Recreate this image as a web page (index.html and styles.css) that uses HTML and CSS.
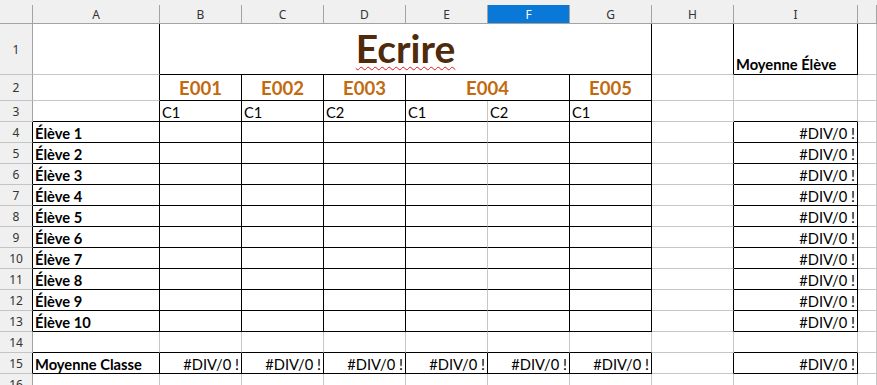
FILE: index.html
```html
<!DOCTYPE html>
<html lang="fr">
<head>
<meta charset="utf-8">
<title>Ecrire</title>
<link rel="stylesheet" href="styles.css">
</head>
<body>
<div class="sheet">
  <!-- column headers -->
  <div class="ch"></div>
  <div class="ch">A</div>
  <div class="ch">B</div>
  <div class="ch">C</div>
  <div class="ch">D</div>
  <div class="ch">E</div>
  <div class="ch sel">F</div>
  <div class="ch">G</div>
  <div class="ch">H</div>
  <div class="ch">I</div>
  <div class="ch"></div>

  <!-- row 1 -->
  <div class="rh">1</div>
  <div class="c br"></div>
  <div class="c br bb title span6"><span class="typo">Ecrire</span></div>
  <div class="c br"></div>
  <div class="c br bb bold lift">Moyenne Élève</div>
  <div class="c"></div>

  <!-- row 2 -->
  <div class="rh">2</div>
  <div class="c br"></div>
  <div class="c br bb code">E001</div>
  <div class="c br bb code">E002</div>
  <div class="c br bb code">E003</div>
  <div class="c br bb code span2">E004</div>
  <div class="c br bb code">E005</div>
  <div class="c"></div>
  <div class="c"></div>
  <div class="c"></div>

  <!-- row 3 -->
  <div class="rh">3</div>
  <div class="c br bb"></div>
  <div class="c br bb">C1</div>
  <div class="c br bb">C1</div>
  <div class="c br bb">C2</div>
  <div class="c bb">C1</div>
  <div class="c br bb">C2</div>
  <div class="c br bb">C1</div>
  <div class="c"></div>
  <div class="c bb"></div>
  <div class="c"></div>

  <!-- rows 4 to 13: students -->
  <div class="rh edge">4</div>
  <div class="c br bb bold">Élève 1</div>
  <div class="c br bb"></div><div class="c br bb"></div><div class="c br bb"></div>
  <div class="c bb"></div><div class="c br bb"></div><div class="c br bb"></div>
  <div class="c br"></div>
  <div class="c br bb num">#DIV/0 !</div>
  <div class="c"></div>

  <div class="rh edge">5</div>
  <div class="c br bb bold">Élève 2</div>
  <div class="c br bb"></div><div class="c br bb"></div><div class="c br bb"></div>
  <div class="c bb"></div><div class="c br bb"></div><div class="c br bb"></div>
  <div class="c br"></div>
  <div class="c br bb num">#DIV/0 !</div>
  <div class="c"></div>

  <div class="rh edge">6</div>
  <div class="c br bb bold">Élève 3</div>
  <div class="c br bb"></div><div class="c br bb"></div><div class="c br bb"></div>
  <div class="c bb"></div><div class="c br bb"></div><div class="c br bb"></div>
  <div class="c br"></div>
  <div class="c br bb num">#DIV/0 !</div>
  <div class="c"></div>

  <div class="rh edge">7</div>
  <div class="c br bb bold">Élève 4</div>
  <div class="c br bb"></div><div class="c br bb"></div><div class="c br bb"></div>
  <div class="c bb"></div><div class="c br bb"></div><div class="c br bb"></div>
  <div class="c br"></div>
  <div class="c br bb num">#DIV/0 !</div>
  <div class="c"></div>

  <div class="rh edge">8</div>
  <div class="c br bb bold">Élève 5</div>
  <div class="c br bb"></div><div class="c br bb"></div><div class="c br bb"></div>
  <div class="c bb"></div><div class="c br bb"></div><div class="c br bb"></div>
  <div class="c br"></div>
  <div class="c br bb num">#DIV/0 !</div>
  <div class="c"></div>

  <div class="rh edge">9</div>
  <div class="c br bb bold">Élève 6</div>
  <div class="c br bb"></div><div class="c br bb"></div><div class="c br bb"></div>
  <div class="c bb"></div><div class="c br bb"></div><div class="c br bb"></div>
  <div class="c br"></div>
  <div class="c br bb num">#DIV/0 !</div>
  <div class="c"></div>

  <div class="rh edge">10</div>
  <div class="c br bb bold">Élève 7</div>
  <div class="c br bb"></div><div class="c br bb"></div><div class="c br bb"></div>
  <div class="c bb"></div><div class="c br bb"></div><div class="c br bb"></div>
  <div class="c br"></div>
  <div class="c br bb num">#DIV/0 !</div>
  <div class="c"></div>

  <div class="rh edge">11</div>
  <div class="c br bb bold">Élève 8</div>
  <div class="c br bb"></div><div class="c br bb"></div><div class="c br bb"></div>
  <div class="c bb"></div><div class="c br bb"></div><div class="c br bb"></div>
  <div class="c br"></div>
  <div class="c br bb num">#DIV/0 !</div>
  <div class="c"></div>

  <div class="rh edge">12</div>
  <div class="c br bb bold">Élève 9</div>
  <div class="c br bb"></div><div class="c br bb"></div><div class="c br bb"></div>
  <div class="c bb"></div><div class="c br bb"></div><div class="c br bb"></div>
  <div class="c br"></div>
  <div class="c br bb num">#DIV/0 !</div>
  <div class="c"></div>

  <div class="rh edge">13</div>
  <div class="c br bb bold">Élève 10</div>
  <div class="c br bb"></div><div class="c br bb"></div><div class="c br bb"></div>
  <div class="c bb"></div><div class="c br bb"></div><div class="c br bb"></div>
  <div class="c br"></div>
  <div class="c br bb num">#DIV/0 !</div>
  <div class="c"></div>

  <!-- row 14 -->
  <div class="rh">14</div>
  <div class="c bb"></div>
  <div class="c bb"></div><div class="c bb"></div><div class="c bb"></div>
  <div class="c bb"></div><div class="c bb"></div><div class="c bb"></div>
  <div class="c"></div>
  <div class="c bb"></div>
  <div class="c"></div>

  <!-- row 15: class averages -->
  <div class="rh edge">15</div>
  <div class="c br bb bold">Moyenne Classe</div>
  <div class="c br bb num">#DIV/0 !</div>
  <div class="c br bb num">#DIV/0 !</div>
  <div class="c br bb num">#DIV/0 !</div>
  <div class="c br bb num">#DIV/0 !</div>
  <div class="c br bb num">#DIV/0 !</div>
  <div class="c br bb num">#DIV/0 !</div>
  <div class="c br"></div>
  <div class="c br bb num">#DIV/0 !</div>
  <div class="c"></div>

  <!-- row 16 -->
  <div class="rh">16</div>
  <div class="c"></div><div class="c"></div><div class="c"></div><div class="c"></div>
  <div class="c"></div><div class="c"></div><div class="c"></div><div class="c"></div>
  <div class="c"></div><div class="c"></div>
</div>
</body>
</html>
```

FILE: styles.css
```css
html, body {
  margin: 0;
  height: 100%;
  overflow: hidden;
  background: #ffffff;
}

/* spreadsheet grid: row header + columns A..I + remainder */
.sheet {
  display: grid;
  grid-template-columns: 33px 127px repeat(7, 82px) 124px 1fr;
  grid-template-rows: 19px 51px 26px;
  grid-auto-rows: 21px;
  padding-top: 5px;
  background: #f0f0f0;
  font-family: Lato, "Noto Sans", sans-serif;
  font-size: 14.7px;
  color: #000000;
}

/* column headers */
.ch {
  display: flex;
  align-items: center;
  justify-content: center;
  background: #f0f0f0;
  border-right: 1px solid #a3a3a3;
  border-bottom: 1px solid #a3a3a3;
  font-family: "Noto Sans", sans-serif;
  font-size: 12px;
  color: #333333;
}

.ch.sel {
  background: #0a78d7;
  color: #ffffff;
}

/* row headers */
.rh {
  display: flex;
  align-items: center;
  justify-content: center;
  background: #f0f0f0;
  border-right: 1px solid #a3a3a3;
  border-bottom: 1px solid #c4c4c4;
  font-family: "Noto Sans", sans-serif;
  font-size: 12px;
  color: #333333;
}

.rh.edge {
  border-right-color: #000000;
}

/* cells */
.c {
  display: flex;
  align-items: flex-end;
  min-width: 0;
  padding: 0 2px;
  background: #ffffff;
  border-right: 1px solid #c6c6c6;
  border-bottom: 1px solid #c6c6c6;
  line-height: 18px;
  white-space: nowrap;
  overflow: hidden;
}

.br { border-right-color: #000000; }
.bb { border-bottom-color: #000000; }

.bold { font-weight: 700; }

.lift { padding-bottom: 1px; }

.num { justify-content: flex-end; }

.span6 { grid-column: span 6; }
.span2 { grid-column: span 2; }

.title {
  justify-content: center;
  padding-bottom: 3px;
  font-size: 39px;
  font-weight: 700;
  line-height: 46px;
  color: #4f2a0b;
}

.typo {
  text-decoration: underline wavy #e8141a;
  text-decoration-thickness: 1px;
  text-underline-offset: 3px;
}

.code {
  justify-content: center;
  padding-bottom: 1px;
  font-size: 18.5px;
  font-weight: 700;
  line-height: 22px;
  color: #c26a0e;
}
```
